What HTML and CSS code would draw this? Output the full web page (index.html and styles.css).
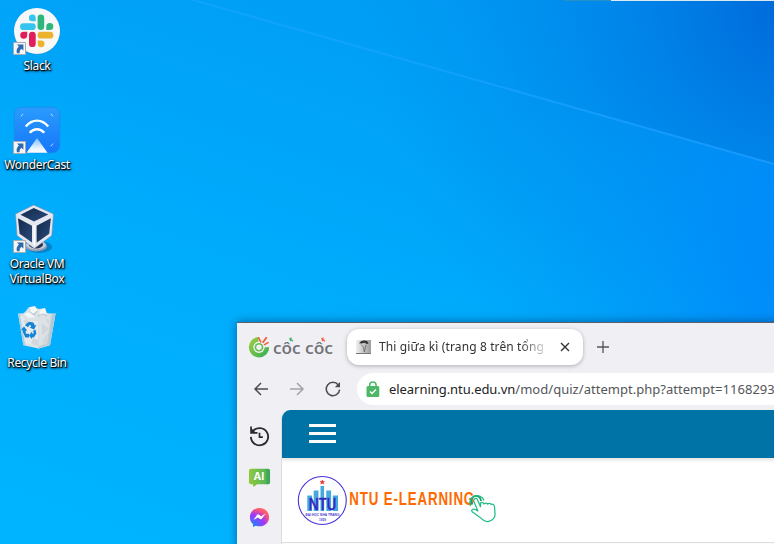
FILE: index.html
```html
<!DOCTYPE html>
<html lang="vi">
<head>
<meta charset="utf-8">
<title>Desktop</title>
<link rel="stylesheet" href="styles.css">
</head>
<body>
<div class="desktop">
  <svg class="wallpaper" viewBox="0 0 774 544" preserveAspectRatio="none" aria-hidden="true">
    <defs>
      <linearGradient id="base" gradientUnits="userSpaceOnUse" x1="120" y1="544" x2="330" y2="-60">
        <stop offset="0" stop-color="#00b4ff"/><stop offset=".5" stop-color="#00abfc"/><stop offset="1" stop-color="#009bf3"/>
      </linearGradient>
      <radialGradient id="deep" gradientUnits="userSpaceOnUse" cx="800" cy="0" r="440">
        <stop offset="0" stop-color="#0066d8"/><stop offset=".3" stop-color="#007ae4" stop-opacity=".85"/><stop offset="1" stop-color="#0092f0" stop-opacity="0"/>
      </radialGradient>
      <radialGradient id="glow" gradientUnits="userSpaceOnUse" cx="830" cy="250" r="340">
        <stop offset="0" stop-color="#0088fb"/><stop offset=".3" stop-color="#008efb" stop-opacity=".85"/><stop offset="1" stop-color="#00a4fa" stop-opacity="0"/>
      </radialGradient>
      <linearGradient id="ray" x1="0" x2="1"><stop offset="0" stop-color="#1aa8ff" stop-opacity=".5"/><stop offset="1" stop-color="#1b9dff" stop-opacity=".85"/></linearGradient>
    </defs>
    <rect width="774" height="544" fill="url(#base)"/>
    <rect width="774" height="544" fill="url(#deep)"/>
    <path d="M190 0 774 164V544H190z" fill="url(#glow)"/>
    <path d="M189 0h8L774 163v2z" fill="url(#ray)"/>
    <path d="M563 0h48v1h-48z" fill="#2590c8"/><path d="M611 0h163v1H611z" fill="#dce8f0"/>
  </svg>

  <svg class="defs" aria-hidden="true">
    <symbol id="shortcut" viewBox="0 0 13 13">
      <path d="M.5.5h12v12H.5z" fill="#f5f5f5" stroke="#a5acb2"/>
      <path d="M4 2.4h6.4v6.2L8.3 6.8Q6.2 8.5 6.5 11.2H4Q2.6 7.5 5.9 4.5z" fill="#2d69ad"/>
    </symbol>
  </svg>

  <div class="icons">
    <div class="item">
      <svg class="pic" viewBox="0 0 48 48">
        <circle cx="24" cy="24.6" r="23" fill="#2878a8" opacity=".5"/>
        <circle cx="24" cy="24" r="23" fill="#f8f8f8"/>
        <path fill="#36c5f0" d="M22.7 14.3H19.4a3.4 3.4 0 1 1 3.3-3.5zM10.4 16.3h9a3.3 3.3 0 0 1 0 6.7h-9a3.3 3.3 0 0 1 0-6.7z"/>
        <path fill="#2eb67d" d="M24.6 10.8a3.3 3.3 0 0 1 6.6 0v8.9a3.3 3.3 0 0 1-6.6 0zM33.3 23v-3.4A3.5 3.5 0 1 1 36.8 23z"/>
        <path fill="#e01e5a" d="M16 28a3.35 3.35 0 0 1 6.7 0v8.7a3.35 3.35 0 0 1-6.7 0zM14.2 24.7V28a3.5 3.5 0 1 1-3.5-3.3z"/>
        <path fill="#ecb22e" d="M28 24.8h9a3.4 3.4 0 0 1 0 6.8h-9a3.4 3.4 0 0 1 0-6.8zM24.7 33.4H28a3.4 3.4 0 1 1-3.3 3.4z"/>
        <use href="#shortcut" x="0" y="35" width="13" height="13"/>
      </svg>
      <span class="label">Slack</span>
    </div>
    <div class="item">
      <svg class="pic" viewBox="0 0 48 48">
        <defs><linearGradient id="wc" x1="0" y1="0" x2="0" y2="1"><stop offset="0" stop-color="#2a9bfd"/><stop offset="1" stop-color="#1577fa"/></linearGradient>
        <linearGradient id="wt" x1="0" y1="0" x2="0" y2="1"><stop offset="0" stop-color="#7fbcff"/><stop offset=".7" stop-color="#e8f4ff"/><stop offset="1" stop-color="#fff"/></linearGradient></defs>
        <rect x="1.3" y="1.3" width="45.4" height="45.4" rx="7" fill="url(#wc)" stroke="#1f86e6" stroke-width=".7"/>
        <path d="M12.8 20.6Q17.5 14.6 24 14.6T35.2 20.6M16.7 26.8Q20 23.2 24 23.2T31.3 26.8" fill="none" stroke="#fff" stroke-width="2.4"/>
        <path d="M24 32 34.5 46.7h-21z" fill="url(#wt)"/>
        <path d="M8.2 10.5q.2-2 2-2.4M37.5 8q2 .3 2.3 2.4M39.9 37.5q-.3 2-2.4 2.4" fill="none" stroke="#a7d8ff" stroke-width="1"/>
        <use href="#shortcut" x="0" y="35" width="13" height="13"/>
      </svg>
      <span class="label">WonderCast</span>
    </div>
    <div class="item">
      <svg class="pic" viewBox="0 0 48 48">
        <defs><linearGradient id="vb" x1="0" y1="0" x2="1" y2="1"><stop offset="0" stop-color="#13294a"/><stop offset="1" stop-color="#2a4a7c"/></linearGradient></defs>
        <ellipse cx="26" cy="42" rx="13" ry="6" fill="#0568a8" opacity=".6"/>
        <ellipse cx="23" cy="41.5" rx="11" ry="5" fill="#8f9bb5"/><ellipse cx="23" cy="40" rx="10" ry="4.6" fill="#c4cbdb"/><ellipse cx="23" cy="39.5" rx="7" ry="4" fill="#24324e"/>
        <path d="M20.7 0 40.5 9 38.8 30.5 21.3 43.5 4 30.5 2.5 9z" fill="#e4e7f0" stroke="#7b89a8" stroke-width=".6"/>
        <path d="M20.8 3 35.3 9.5 21 16.5 7.5 9.7z" fill="url(#vb)"/>
        <path d="M5 13.2 19 20.8V37.6L6.6 28.7z" fill="url(#vb)"/>
        <path d="M37.9 13.2 36.2 28.7 23.6 37.8V20.8z" fill="url(#vb)"/>
        <path d="M21.3 20v20" stroke="#fff" stroke-width="1.2"/>
        <use href="#shortcut" x="0" y="35" width="13" height="13"/>
      </svg>
      <span class="label">Oracle VM<br>VirtualBox</span>
    </div>
    <div class="item">
      <svg class="pic" viewBox="0 0 48 48">
        <path d="M5 9.6 42.6 9.6 37 41.2 25.5 44.5 10.3 41.2z" fill="#dde4e8"/>
        <path d="M26 14 42.6 9.6 37 41.2 25.5 44.5z" fill="#c5ced5"/>
        <path d="m5 9.6 3 1.5 4.3 30.6-2-.5zM39.5 10.5l3.1-.9L37 41.2l-2 .7z" fill="#a5c9de" opacity=".8"/>
        <path d="M7 12q3-2 10-2l8 5v27L12 39zM26 15l12-3-4 27-8 3z" fill="#e9edef" opacity=".65"/>
        <path d="m10 17 7-4-3 9zm10 17 5 2v6l-7-2zm9-15 7 6-7 6zm6-5 2 6-4-2zm-4 20 4-5-1 9-5 2z" fill="#cbd2d6" opacity=".7"/>
        <path d="m8 11 4-3 4-5 7 1 3 1 6-1 2 5 5 2-10 6H14z" fill="#dbe2e6"/>
        <path d="m17 3 5-1 3 5-7 3zm9 4 6-3 1 6-6 2zm-15 3 6-2 5 5-7 1z" fill="#f5f6f6"/>
        <path d="m17 8 4 3 3-4M25 12l5-2 4 2" fill="none" stroke="#b4bec5"/>
        <g fill="#1583d6"><path d="m13 20 3-2.2 4.4.6 1.4 3 1.6-.6-2.3 4.7-4.5-2 1.6-.8-1.2-2.2-2 2.8-3-2z"/><path d="m11 22.5 3.2 4-1.6.3.3 3h3.2v3.6h-3.8l-2.2-4.8-.6-2.5-1.3-.4z"/><path d="m22.4 25.5 1 4-2.4 3.7-2 .3.1 1.7-3.2-3.8 3.2-3.8v2h1.8l-.8-2.8z"/></g>
      </svg>
      <span class="label">Recycle Bin</span>
    </div>
  </div>

  <div class="window">
    <div class="tabstrip">
      <svg class="brand" viewBox="0 0 86 24">
        <defs><linearGradient id="cc" x1="0" y1="0" x2="1" y2="1"><stop offset="0" stop-color="#a6cf3c"/><stop offset="1" stop-color="#2fae5a"/></linearGradient></defs>
        <path d="M11 2A10.2 10.2 0 1 0 21.2 12.2h-4.8L10 8.5z" fill="url(#cc)"/>
        <circle cx="11" cy="12.2" r="5.7" fill="#f1f0f5"/>
        <circle cx="11" cy="12.2" r="4.3" fill="#66bd47"/><circle cx="11" cy="12.2" r="2.7" fill="#f1f0f5"/>
        <path d="M10.4 2.4 13 7.4" stroke="#f15a3b" stroke-width="1.5"/><path d="M18.7 2.2 14.7 7.8" stroke="#f15a3b" stroke-width="1.8"/><path d="M20.6 7.3 16 9.8" stroke="#f15a3b" stroke-width="1.5"/>
        <text x="25" y="19.3" textLength="27.5" lengthAdjust="spacingAndGlyphs" class="brand-word">côc</text>
        <text x="57" y="19.3" textLength="28" lengthAdjust="spacingAndGlyphs" class="brand-word">côc</text>
        <path d="m41.5 3.2 3.5 3M42.8 6q-1.5-2 .8-3.3" stroke="#35b36b" stroke-width="1.2" fill="none"/>
        <path d="m73.5 3.2 3.5 3M74.8 6q-1.5-2 .8-3.3" stroke="#f15a3b" stroke-width="1.2" fill="none"/>
      </svg>
      <div class="tab">
        <svg class="favicon" viewBox="0 0 16 16">
          <defs><linearGradient id="fv" x1="0" x2="1"><stop offset="0" stop-color="#f0f0f0"/><stop offset="1" stop-color="#9b9b9b"/></linearGradient></defs>
          <path d="M0 1h15v14H0z" fill="url(#fv)"/><path d="M0 14h15v1H0z" fill="#777"/>
          <path d="M3 4.200q2-3 5-2.800 3.800-.2 4.500 3.200L10.500 5 9 3.800 5 4.600z" fill="#333"/><path d="m5 5.500 2.500 2.700L8.300 13l1.700-7" fill="none" stroke="#666" stroke-width=".8"/>
        </svg>
        <span class="tab-title">Thi giữa kì (trang 8 trên tổng</span>
        <svg class="close" viewBox="0 0 10 10"><path d="m1 1 8 8M9 1 1 9" stroke="#333" stroke-width="1.4"/></svg>
      </div>
      <svg class="plus" viewBox="0 0 12 12"><path d="M6 0v12M0 6h12" stroke="#555" stroke-width="1.3"/></svg>
    </div>
    <div class="toolbar">
      <svg class="nav" viewBox="0 0 20 20"><path d="M17 10H4M10 4 4 10l6 6" fill="none" stroke="#4b4b50" stroke-width="1.5"/></svg>
      <svg class="nav" viewBox="0 0 20 20"><path d="M3 10h13M10 4l6 6-6 6" fill="none" stroke="#a3a3a8" stroke-width="1.5"/></svg>
      <svg class="nav" viewBox="0 0 20 20"><path d="M15.3 6A6.7 6.7 0 1 0 16.6 10.6" fill="none" stroke="#4b4b50" stroke-width="1.5"/><path d="M17 3v5.2h-5.2z" fill="#4b4b50"/></svg>
      <div class="address">
        <svg class="lock" viewBox="0 0 14 16"><path d="M3.7 7V4.300a3.200 3.200 0 0 1 6.400 0V7" fill="none" stroke="#4db868" stroke-width="1.5"/><rect x=".5" y="5" width="12.8" height="11" rx="1.5" fill="#4db868"/><path d="m4 10.4 2.1 2.1 3.8-4" fill="none" stroke="#fff" stroke-width="1.4"/></svg>
        <span class="url"><b>elearning.ntu.edu.vn</b>/mod/quiz/attempt.php?attempt=1168293</span>
      </div>
    </div>
    <div class="main">
      <div class="sidebar">
        <svg class="side" viewBox="0 0 24 24"><path d="M5.3 6.2A9 9 0 1 1 3 12.4" fill="none" stroke="#2b2b2e" stroke-width="1.9"/><path d="M3.2 1.5v6.6h6.7" fill="none" stroke="#2b2b2e" stroke-width="1.8"/><path d="m3.3 3 4 4-4 1z" fill="#2b2b2e"/><path d="M12 8v4.6h3.5" fill="none" stroke="#2b2b2e" stroke-width="1.8"/></svg>
        <svg class="side" viewBox="0 0 24 24"><defs><linearGradient id="ai"><stop offset="0" stop-color="#93c83d"/><stop offset="1" stop-color="#45b35e"/></linearGradient></defs><path d="M3 2.8h18q2 0 2 2V17q0 2-2 2H9.5L5.8 21.8 5 19H3q-2 0-2-2V4.8q0-2 2-2z" fill="url(#ai)"/><path d="M23 5v12q0 2-2 2h-2V3h2q2 0 2 2z" fill="#389c51" opacity=".5"/><text x="11.6" y="14.6" text-anchor="middle" class="ai-text">AI</text></svg>
        <svg class="side" viewBox="0 0 24 24"><defs><radialGradient id="ms" cx=".15" cy="1" r="1.1"><stop offset="0" stop-color="#0a90ff"/><stop offset=".58" stop-color="#a137fb"/><stop offset=".85" stop-color="#f6557c"/><stop offset="1" stop-color="#ff6968"/></radialGradient></defs><path d="M12 2C6.3 2 2 6.2 2 11.7c0 3 1.2 5.5 3.2 7.2V22l3-1.4c1.2.4 2.4.6 3.8.6 5.7 0 10-4 10-9.5S17.7 2 12 2z" fill="url(#ms)"/><path d="m5.6 14.7 3.9-5.5q.8-1 1.9-.2l2.3 1.7 4.7-2.8-3.9 5.5q-.8 1-1.9.2l-2.3-1.7z" fill="#fff"/></svg>
      </div>
      <div class="page">
        <div class="navbar"><div class="burger"><i></i><i></i><i></i></div></div>
        <div class="banner">
          <svg class="ntu" viewBox="0 0 210 52">
            <circle cx="25.3" cy="26.5" r="24" fill="#fff" stroke="#4a31dc" stroke-width="1.1"/>
            <path d="M10.3 21.5h4.8V37h-4.8zM16.7 16.5h4.8V37h-4.8zM23.5 12h3.6V37h-3.6zM29.3 16.5h4.8V37h-4.8zM35.8 21.5H41V37h-5.2z" fill="#45a9de"/>
            <path d="m25.3 6 .7 1.5h1.6l-1.3 1 .5 1.6-1.5-.9-1.5.9.5-1.6-1.3-1h1.6z" fill="#ee2d2d" stroke="#ee2d2d" stroke-width=".5"/>
            <text x="11.5" y="36" textLength="28" lengthAdjust="spacingAndGlyphs" class="seal-name">NTU</text>
            <text x="8.5" y="41.5" textLength="34" lengthAdjust="spacingAndGlyphs" class="seal-small">ĐẠI HỌC NHA TRANG</text>
            <text x="22" y="46.5" textLength="7" lengthAdjust="spacingAndGlyphs" class="seal-small">1959</text>
            <g transform="translate(52.3 31) scale(.72 1)"><text textLength="173.500" lengthAdjust="spacing" class="ntu-title">NTU E-LEARNING</text></g>
            <g transform="translate(-1.5 -.5)">
            <path d="M177 31A5 5 0 1 1 185.5 27.5" fill="none" stroke="#159d68" stroke-width="1.8"/>
            <path d="M175 32.5A7.3 7.3 0 1 1 188.5 27" fill="none" stroke="#20bd83" stroke-width="1.3"/>
            <path d="M179 25.5q1.7-1.5 3 .8l3 7v-3.8q2-1.7 3.5 1 1.8-2 3.6 0 2-1.6 3.6.4 3-1 3.4 3l.4 7q.2 5-7 7.2-3 .6-6.500-3l-9-6.500q-1.700-1.800.2-2.800 1.800-.9 5.200 1.600l-4.200-9.600q-.3-1.500.8-2.300z" fill="#fff" stroke="#20bd83" stroke-width="1.25" stroke-linejoin="round"/>
            </g>
          </svg>
        </div>
        <div class="below"></div>
      </div>
    </div>
  </div>
</div>
</body>
</html>
```
FILE: styles.css
```css
* { box-sizing: border-box; }
body { margin: 0; overflow: hidden; font-family: "Noto Sans", "Open Sans", sans-serif; }
svg { display: block; flex: none; }
.defs { position: absolute; width: 0; height: 0; }
.desktop { position: relative; width: 774px; height: 544px; overflow: hidden; background: #00aafb; }
.wallpaper { position: absolute; inset: 0; width: 774px; height: 544px; }

.icons { position: relative; display: grid; grid-template-rows: repeat(4, 99px); width: 74px; padding-top: 7px; }
.item { display: flex; flex-direction: column; align-items: center; gap: 3px; }
.pic { width: 48px; height: 48px; overflow: visible; }
.label {
  color: #fff; font-size: 12px; line-height: 15px; letter-spacing: -.35px;
  text-align: center; white-space: nowrap;
  text-shadow: 1px 1px 1px #000, 0 1px 2px #000, 1px 1px 3px rgba(0, 0, 0, .8);
}

.window {
  position: absolute; left: 237px; top: 322px; width: 560px; height: 260px;
  background: #f0eff4; border-top: 1px solid #59616c;
  box-shadow: 0 0 9px rgba(0, 30, 70, .5);
}
.tabstrip { display: flex; align-items: center; height: 50px; padding: 0 0 2px 11px; }
.brand { width: 86px; height: 24px; margin-right: 13px; }
.brand-word { font: 600 17px "Open Sans", sans-serif; fill: #727377; }
.tab {
  display: flex; align-items: center; width: 236px; height: 36px; padding: 0 13px 0 9px;
  background: #fff; border-radius: 12px; box-shadow: 0 1px 4px rgba(0, 0, 0, .28);
}
.favicon { width: 16px; height: 16px; margin-right: 7px; }
.tab-title {
  flex: none; width: 168px; overflow: hidden; white-space: nowrap; font-size: 12px; line-height: 20px; letter-spacing: .12px; color: #333;
  -webkit-mask-image: linear-gradient(90deg, #000 140px, transparent 172px);
  mask-image: linear-gradient(90deg, #000 140px, transparent 172px);
}
.close { width: 10px; height: 10px; margin-left: auto; }
.plus { width: 12px; height: 12px; margin-left: 14px; }
.toolbar { display: flex; align-items: center; gap: 16px; height: 32px; padding-left: 14px; }
.nav { width: 20px; height: 20px; }
.address { display: flex; align-items: center; flex: 1; height: 32px; margin-left: -2px; padding-left: 9px; background: #fff; border-radius: 16px 0 0 16px; }
.lock { width: 14px; height: 16px; margin-right: 9px; }
.url { font-size: 13px; line-height: 20px; letter-spacing: .03px; color: #55565a; white-space: nowrap; }
.url b { font-weight: 400; color: #222; letter-spacing: -.05px; }
.main { display: flex; height: 140px; padding-top: 5px; }
.sidebar { display: flex; flex-direction: column; align-items: center; width: 44px; padding-top: 15px; gap: 17px; }
.side { width: 23px; height: 23px; }
.side + .side { position: relative; top: 1px; }
.ai-text { font: 700 11px "Open Sans", sans-serif; fill: #fff; }
.page { flex: 1; border-left: 1px solid #dcdce2; border-radius: 9px 0 0 0; background: #fff; overflow: hidden; }
.navbar { height: 48px; padding: 14px 0 0 27px; background: #0073a6; box-shadow: 0 2px 4px rgba(0, 0, 0, .12); position: relative; }
.burger { display: grid; gap: 5px; width: 27px; }
.burger i { height: 3px; background: #fff; }
.banner { height: 85px; padding: 16px 0 0 15px; border-bottom: 1px solid #dedede; }
.ntu { width: 210px; height: 52px; }
.seal-name { font: 500 15.5px "Noto Sans", sans-serif; fill: #3426c4; stroke: #3426c4; stroke-width: .4px; }
.seal-small { font: 700 4px "Liberation Sans", sans-serif; fill: #4c3bd2; }
.ntu-title { font: 700 18.5px "Liberation Sans", sans-serif; fill: #ff6a00; }
.below { height: 20px; background: #fafafa; }
```
